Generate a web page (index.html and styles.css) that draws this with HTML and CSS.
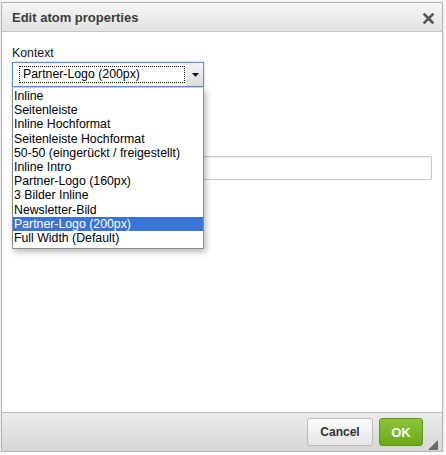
FILE: index.html
```html
<!DOCTYPE html>
<html>
<head>
<meta charset="utf-8">
<link rel="stylesheet" href="styles.css">
</head>
<body>
<div class="dialog">
  <div class="titlebar">
    <span class="title">Edit atom properties</span>
    <span class="close">
      <svg width="11" height="11" viewBox="0 0 11 11"><path d="M1.5 1.5 L9.5 9.5 M9.5 1.5 L1.5 9.5" stroke="#555" stroke-width="2.6" stroke-linecap="square"/></svg>
    </span>
  </div>
  <div class="content">
    <div class="field">
      <div class="label">Kontext</div>
      <div class="select">
        <div class="select-value"><span class="focus">Partner-Logo (200px)</span></div>
        <div class="select-arrow">
          <svg width="7" height="4" viewBox="0 0 7 4"><path d="M0 0 H7 L3.5 4 Z" fill="#111"/></svg>
        </div>
      </div>
      <ul class="options">
        <li>Inline</li>
        <li>Seitenleiste</li>
        <li>Inline Hochformat</li>
        <li>Seitenleiste Hochformat</li>
        <li>50-50 (eingerückt / freigestellt)</li>
        <li>Inline Intro</li>
        <li>Partner-Logo (160px)</li>
        <li>3 Bilder Inline</li>
        <li>Newsletter-Bild</li>
        <li class="selected">Partner-Logo (200px)</li>
        <li>Full Width (Default)</li>
      </ul>
    </div>
    <div class="field field-text">
      <div class="text-input"></div>
    </div>
  </div>
  <div class="footer">
    <button class="btn btn-cancel">Cancel</button>
    <button class="btn btn-ok">OK</button>
    <span class="grip"></span>
  </div>
</div>
</body>
</html>
```
FILE: styles.css
```css
html, body {
  margin: 0;
  padding: 0;
  background: #fff;
}
body {
  font-family: "Liberation Sans", Arial, sans-serif;
  font-size: 12px;
  color: #111;
}
.dialog {
  margin: 2px 0 0 1px;
  width: 440px;
  border: 1px solid #b4b4b4;
  background: #fff;
  box-shadow: 0 1px 4px rgba(0,0,0,0.18);
}
.titlebar {
  height: 28px;
  border-bottom: 1px solid #c4c4c4;
  background: linear-gradient(#f6f6f6, #e2e2e2);
  display: flex;
  align-items: center;
  justify-content: space-between;
  padding: 0 8px 0 10px;
}
.title {
  font-size: 13px;
  font-weight: bold;
  color: #3c3c3c;
  line-height: 16px;
  padding-top: 1px;
}
.close {
  display: flex;
  width: 11px;
  height: 11px;
  margin-top: 2px;
}
.content {
  height: 366px;
  padding: 14px 10px 0 10px;
}
.field {
  position: relative;
}
.label {
  line-height: 14px;
  margin-bottom: 2px;
  color: #111;
  font-size: 12.3px;
}
.select {
  width: 190px;
  height: 23px;
  border: 1px solid #4f95e0;
  box-shadow: 0 0 2px rgba(80,150,230,0.6);
  background: #fff;
  display: flex;
}
.select-value {
  flex: 1;
  padding: 3px 0 0 6px;
}
.focus {
  display: block;
  width: 161px;
  height: 15px;
  border: 1px dotted #111;
  padding-left: 3px;
  line-height: 15px;
  color: #000;
  font-size: 12.3px;
}
.select-arrow {
  width: 16px;
  background: linear-gradient(#f4f4f4, #dcdcdc);
  display: flex;
  align-items: center;
  justify-content: center;
  padding-top: 1px;
}
.options {
  position: absolute;
  top: 41px;
  left: 0;
  width: 190px;
  margin: 0;
  padding: 1px 0 3px 0;
  list-style: none;
  background: #fff;
  border: 1px solid #8c8c8c;
  border-top-color: #cfcfcf;
  box-shadow: 2px 3px 6px rgba(0,0,0,0.28);
  z-index: 2;
}
.options li {
  line-height: 14.2px;
  height: 14.2px;
  padding-left: 1px;
  color: #000;
  white-space: nowrap;
  font-size: 12.3px;
}
.options li.selected {
  background: #3a75d6;
  color: #fff;
}
.field-text {
  margin-top: 69px;
}
.text-input {
  height: 22px;
  border: 1px solid #c8c8c8;
  border-radius: 2px;
  box-shadow: inset 0 1px 2px rgba(0,0,0,0.08);
  background: #fff;
}
.footer {
  position: relative;
  height: 39px;
  border-top: 1px solid #bdbdbd;
  background: linear-gradient(#ececec, #d6d6d6);
  display: flex;
  justify-content: flex-end;
  align-items: flex-start;
  gap: 6px;
  padding: 5px 19px 0 0;
  box-sizing: border-box;
}
.btn {
  height: 28px;
  margin: 0;
  border-radius: 3px;
  font-family: "Liberation Sans", Arial, sans-serif;
  font-size: 12px;
  font-weight: bold;
  padding: 0;
  cursor: pointer;
}
.btn-cancel {
  width: 66px;
  border: 1px solid #b9b9b9;
  background: linear-gradient(#fdfdfd, #e4e4e4);
  color: #333;
}
.btn-ok {
  width: 44px;
  border: 1px solid #5f9a14;
  background: linear-gradient(#8cc43a, #6aa914);
  color: #fff;
  font-size: 13px;
}
.grip {
  position: absolute;
  right: 4px;
  bottom: 1px;
  width: 0;
  height: 0;
  border-left: 10px solid transparent;
  border-bottom: 10px solid #6a6a6a;
}
```
